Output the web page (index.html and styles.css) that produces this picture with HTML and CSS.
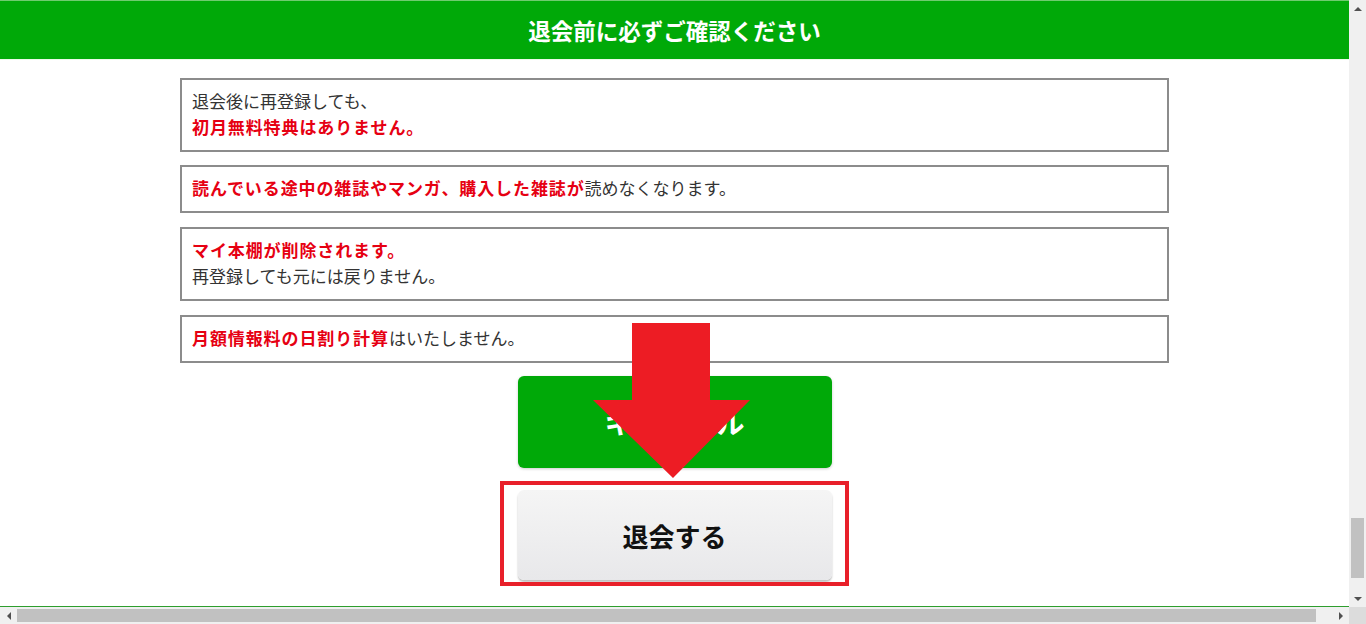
FILE: index.html
```html
<!DOCTYPE html>
<html lang="ja">
<head>
  <meta charset="UTF-8">
  <meta name="viewport" content="width=device-width, initial-scale=1.0">
  <title>退会手続き</title>
  <link rel="stylesheet" href="styles.css">
</head>
<body>
  <div class="window">
    <div class="viewport">
      <header class="header">
        <h1>退会前に必ずご確認ください</h1>
      </header>

      <main class="container">
        <div class="notice">
          退会後に再登録しても、<br>
          <strong>初月無料特典はありません。</strong>
        </div>
        <div class="notice">
          <strong>読んでいる途中の雑誌やマンガ、購入した雑誌が</strong>読めなくなります。
        </div>
        <div class="notice">
          <strong>マイ本棚が削除されます。</strong><br>
          再登録しても元には戻りません。
        </div>
        <div class="notice notice-last">
          <strong>月額情報料の日割り計算</strong>はいたしません。
        </div>

        <div class="actions">
          <button type="button" class="btn btn-cancel">キャンセル</button>
          <div class="withdraw-wrap">
            <button type="button" class="btn btn-withdraw">退会する</button>
            <div class="highlight"></div>
          </div>
          <svg class="arrow" width="157" height="155" viewBox="0 0 157 155">
            <polygon points="39,0 117,0 117,77 157,77 80,155 0,77 39,77" fill="#ed1c24"/>
          </svg>
        </div>
      </main>

      <footer class="footer"></footer>
    </div>

    <div class="vbar">
      <div class="sb-btn"><span class="tri tri-up"></span></div>
      <div class="vtrack"><div class="vthumb"></div></div>
      <div class="sb-btn"><span class="tri tri-down"></span></div>
    </div>
    <div class="hbar">
      <div class="sb-btn"><span class="tri tri-left"></span></div>
      <div class="htrack"><div class="hthumb"></div></div>
      <div class="sb-btn"><span class="tri tri-right"></span></div>
    </div>
    <div class="corner"></div>
  </div>
</body>
</html>
```

FILE: styles.css
```css
html, body {
  margin: 0;
  height: 100%;
  overflow: hidden;
}
body {
  font-family: "Noto Sans CJK JP", "Noto Sans", sans-serif;
  background: #fff;
  color: #333;
}
.window {
  display: grid;
  grid-template-columns: 1fr 17px;
  grid-template-rows: 1fr 17px;
  height: 100vh;
}
.viewport {
  overflow: hidden;
}
.header {
  background-color: #00a908;
  border-top: 1px solid #6fcb6f;
  border-bottom: 1px solid #ecfbea;
  height: 58px;
  display: flex;
  justify-content: center;
  align-items: center;
}
.header h1 {
  margin: 0;
  color: #fff;
  font-size: 22.5px;
  font-weight: bold;
  line-height: 1;
}
.container {
  width: 989px;
  margin: 0 auto;
  padding-top: 18px;
}
.notice {
  border: 2px solid #8c8c8c;
  padding: 8px 10px 10px;
  font-size: 17px;
  line-height: 26px;
  margin-bottom: 14px;
}
.notice:first-child {
  margin-bottom: 13px;
}
.notice-last {
  margin-bottom: 0;
}
.notice strong {
  color: #e60012;
  font-weight: bold;
  letter-spacing: 0.9px;
}
.actions {
  position: relative;
  width: 314px;
  margin: 13px auto 0;
}
.btn {
  display: block;
  width: 314px;
  border: none;
  border-radius: 6px;
  font-family: "Noto Sans CJK JP", "Noto Sans", sans-serif;
  font-size: 26px;
  font-weight: bold;
  cursor: pointer;
}
.btn-cancel {
  height: 92px;
  background-color: #00a908;
  color: #fff;
  font-size: 28px;
  box-shadow: 0 1px 3px rgba(0, 0, 0, 0.2);
}
.withdraw-wrap {
  position: relative;
  margin-top: 22px;
}
.btn-withdraw {
  height: 90px;
  background: linear-gradient(#f5f5f5, #e8e8ea);
  color: #111;
  box-shadow: 0 2px 2px rgba(0, 0, 0, 0.25);
}
.highlight {
  position: absolute;
  top: -9px;
  left: -18px;
  right: -17px;
  bottom: -6px;
  border: 4px solid #e8202a;
}
.arrow {
  position: absolute;
  top: -53px;
  left: 75px;
}
.footer {
  margin-top: 26px;
  border-top: 1px solid #2e9e2e;
  height: 20px;
}

/* scrollbars */
.vbar, .hbar {
  background: #f0f0f0;
  display: flex;
}
.vbar {
  flex-direction: column;
}
.sb-btn {
  width: 17px;
  height: 17px;
  display: flex;
  justify-content: center;
  align-items: center;
  flex-shrink: 0;
}
.vtrack {
  flex: 1;
  display: flex;
  flex-direction: column;
  justify-content: flex-end;
  align-items: center;
}
.vthumb {
  width: 13px;
  height: 60px;
  margin-bottom: 12px;
  background: #c1c1c1;
}
.htrack {
  flex: 1;
  display: flex;
  align-items: center;
}
.hthumb {
  height: 13px;
  width: 1299px;
  background: #c1c1c1;
}
.corner {
  background: #dcdcdc;
}
.tri {
  width: 0;
  height: 0;
  border: 4px solid transparent;
}
.tri-up {
  border-bottom-color: #505050;
  margin-top: -4px;
}
.tri-down {
  border-top-color: #505050;
  margin-bottom: -4px;
}
.tri-left {
  border-right-color: #505050;
  margin-left: -4px;
}
.tri-right {
  border-left-color: #505050;
  margin-right: -4px;
}
```
